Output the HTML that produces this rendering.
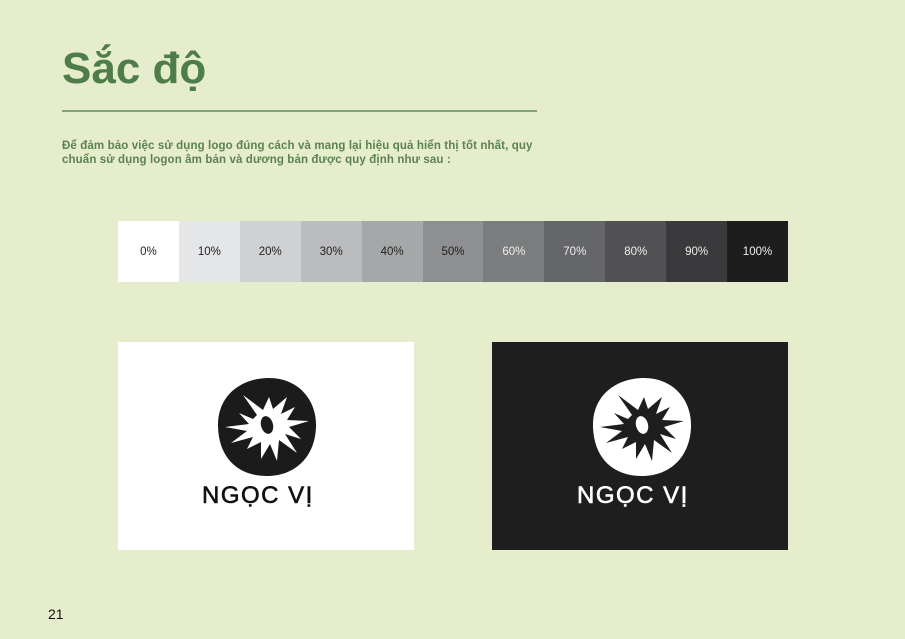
<!DOCTYPE html>
<html><head><meta charset="utf-8"><style>
*{margin:0;padding:0;box-sizing:border-box}
body{width:905px;height:639px;background:#e6edcc;font-family:"Liberation Sans",sans-serif;position:relative;overflow:hidden}
h1{position:absolute;left:62px;top:44px;font-size:44px;font-weight:bold;color:#4f7d4a;letter-spacing:0px}
.rule{position:absolute;left:62px;top:110px;width:475px;height:2px;background:#86a178}
.p{position:absolute;left:62px;top:139px;font-size:11.5px;font-weight:bold;color:#5b8250;line-height:14px;width:490px;letter-spacing:0.12px}
.sw{position:absolute;left:118px;top:221px;width:670px;height:61px;display:flex}
.sw div{flex:1;display:flex;align-items:center;justify-content:center;font-size:11.5px}
.panel{position:absolute;top:342px;height:208px}
.num{position:absolute;left:48px;top:606px;font-size:14px;color:#111}
.lt{position:absolute;font-size:24px;letter-spacing:1.5px;font-weight:normal;-webkit-text-stroke:0.6px currentColor}
</style></head><body>
<h1>Sắc độ</h1>
<div class="rule"></div>
<div class="p">Để đảm bảo việc sử dụng logo đúng cách và mang lại hiệu quả hiển thị tốt nhất, quy chuẩn sử dụng logon âm bản và dương bản được quy định như sau :</div>
<div class="sw">
<div style="background:#fff;color:#222">0%</div>
<div style="background:#e5e6e8;color:#222">10%</div>
<div style="background:#d0d1d3;color:#222">20%</div>
<div style="background:#bbbcbe;color:#222">30%</div>
<div style="background:#a5a7a8;color:#222">40%</div>
<div style="background:#8e8f91;color:#222">50%</div>
<div style="background:#7b7c7e;color:#eee">60%</div>
<div style="background:#656669;color:#eee">70%</div>
<div style="background:#515154;color:#eee">80%</div>
<div style="background:#3a3a3c;color:#eee">90%</div>
<div style="background:#1e1d1e;color:#eee">100%</div>
</div>
<svg width="0" height="0" style="position:absolute"><defs>
<g id="star"><path d="M40 38 L26 18 L46 33 L52 20 L56 32 L70 20 L64 37 L78 30 L70 43 L92 44 L72 50 L84 62 L68 57 L80 76 L62 63 L60 84 L53 67 L44 82 L44 65 L30 72 L36 60 L14 66 L30 54 L8 50 L32 47 L22 36 L36 42 Z"/></g>
</defs></svg>
<div class="panel" style="left:118px;width:296px;background:#fff"></div>
<svg style="position:absolute;left:217px;top:377px" width="100" height="100" viewBox="0 0 100 100">
<path d="M50 1 C80 0 100 22 99 50 C98 80 78 99 50 99 C20 99 2 80 1 50 C0 20 22 2 50 1Z" fill="#1c1b1b"/>
<use href="#star" fill="#fff"/>
<ellipse cx="50" cy="48" rx="6" ry="9" fill="#1c1b1b" transform="rotate(-15 50 48)"/>
</svg>
<div class="lt" style="left:202px;top:482px;color:#111">NGỌC VỊ</div>
<div class="panel" style="left:492px;width:296px;background:#1f1e1e"></div>
<svg style="position:absolute;left:592px;top:377px" width="100" height="100" viewBox="0 0 100 100">
<path d="M50 1 C80 0 100 22 99 50 C98 80 78 99 50 99 C20 99 2 80 1 50 C0 20 22 2 50 1Z" fill="#fff"/>
<use href="#star" fill="#1f1e1e"/>
<ellipse cx="50" cy="48" rx="6" ry="9" fill="#fff" transform="rotate(-15 50 48)"/>
</svg>
<div class="lt" style="left:577px;top:482px;color:#fff">NGỌC VỊ</div>
<div class="num">21</div>
</body></html>
